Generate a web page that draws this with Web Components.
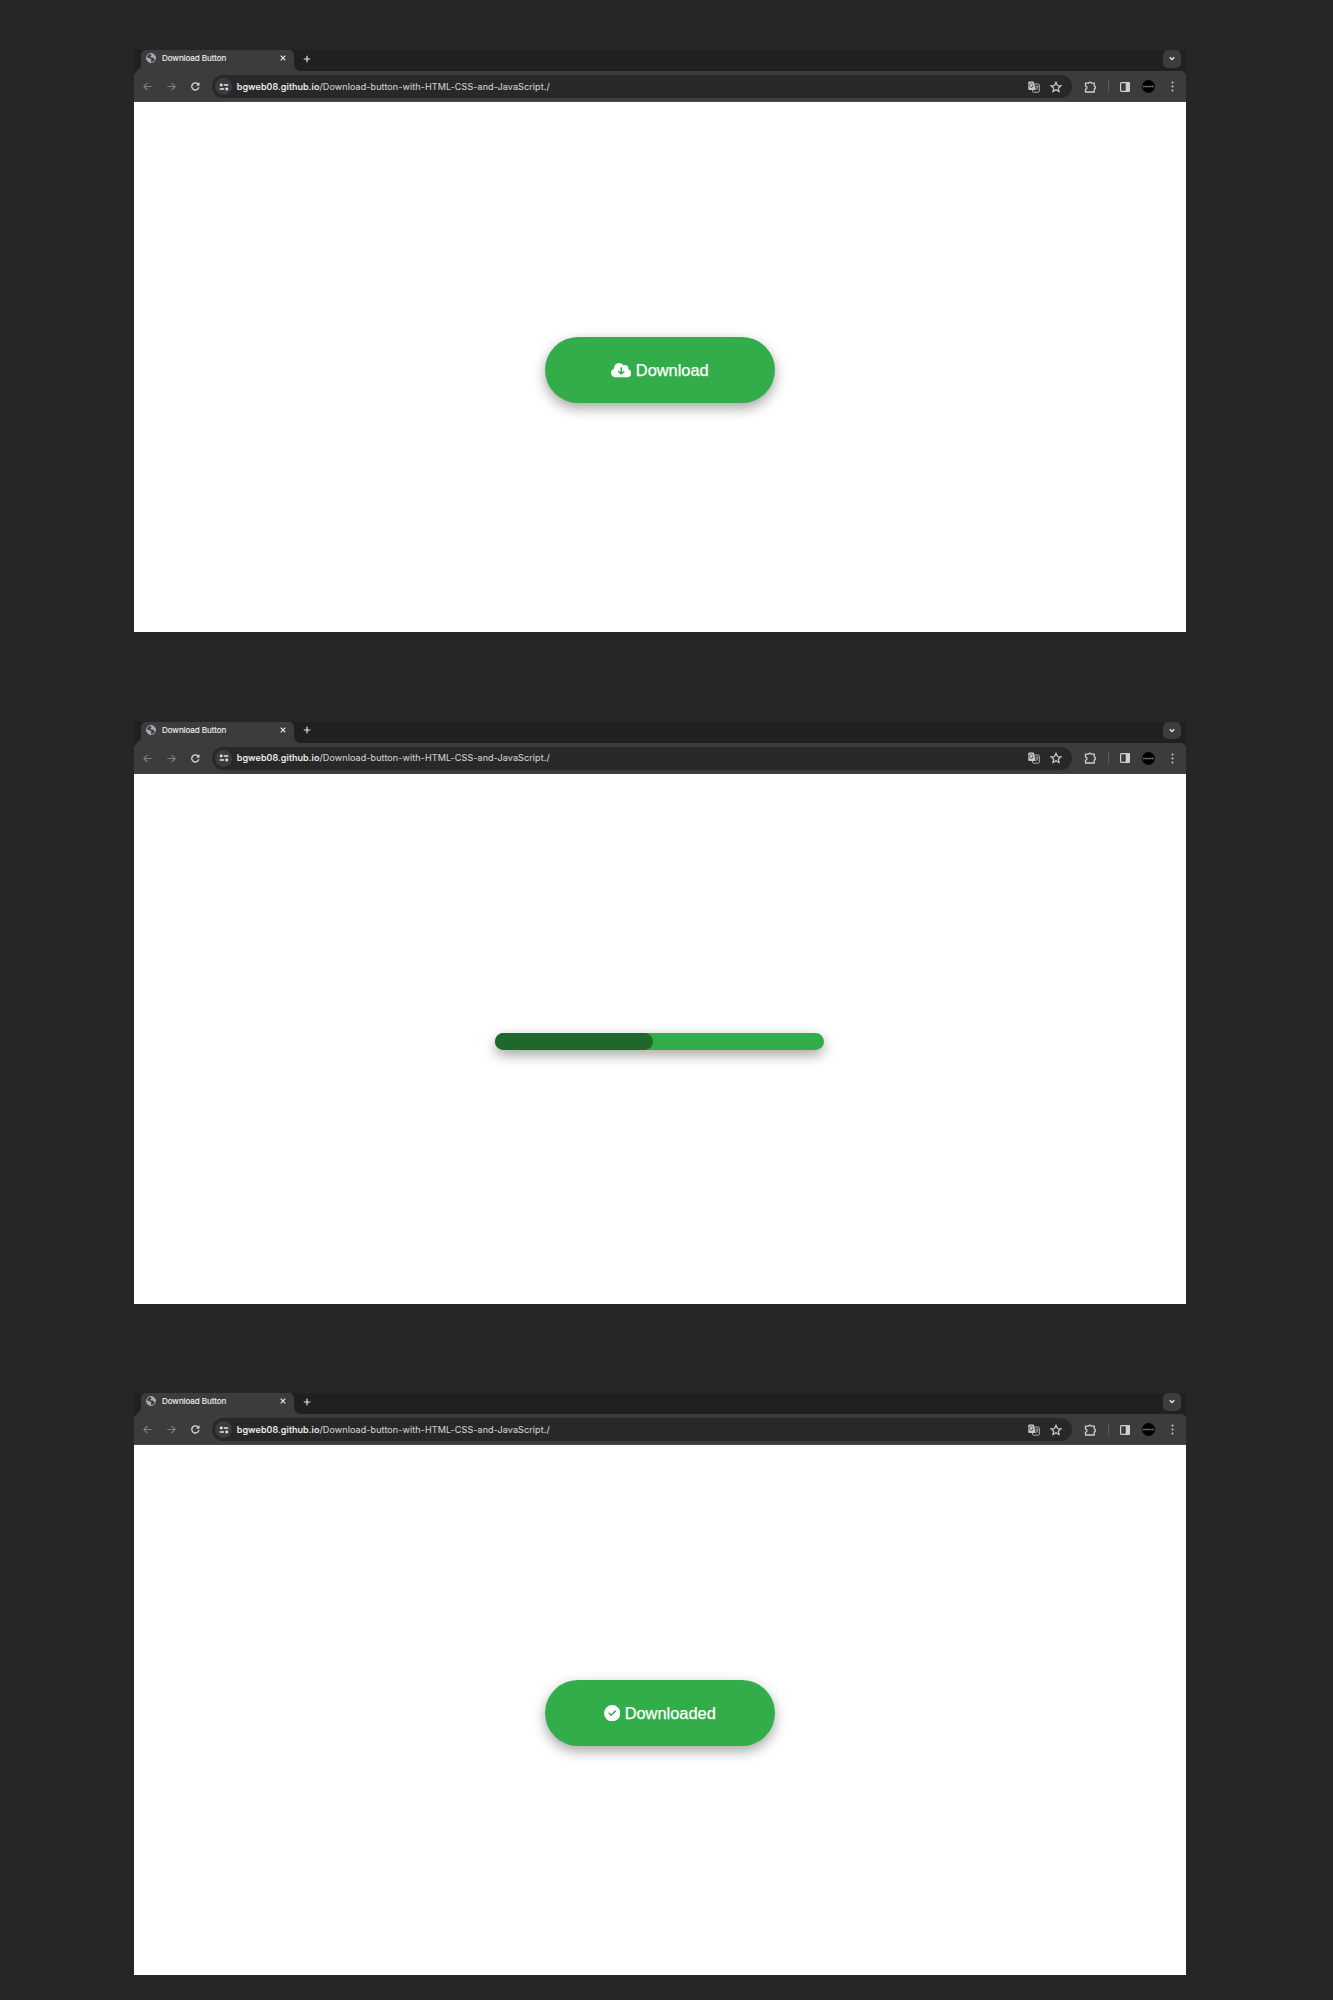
<!DOCTYPE html>
<html lang="en">
<head>
<meta charset="utf-8">
<title>Download Button</title>
<style>
html{background:#262626}
body{margin:0;height:2000px;overflow:hidden;background:#262626;font-family:Inter,"Liberation Sans",sans-serif}
.board{display:flex;flex-direction:column;align-items:flex-start;gap:89.3px;padding:50px 0 0 133.600px}
</style>
</head>
<body>
<div class="board">
  <browser-window><download-button label="Download" icon="cloud"></download-button></browser-window>
  <browser-window edge="#4b4143"><download-progress></download-progress></browser-window>
  <browser-window><download-button label="Downloaded" icon="check"></download-button></browser-window>
</div>
<script>
class TabStrip extends HTMLElement{
  constructor(){super();this.attachShadow({mode:'open'}).innerHTML=`
<style>
:host{display:flex;height:21px;background:#202020;padding:0 4.5px 0 7.4px;box-sizing:border-box;align-items:flex-start}
.tab{position:relative;display:flex;align-items:center;width:153px;height:21px;box-sizing:border-box;background:#3c3c3c;border-radius:5px 5px 0 0;padding:0 7.6px 5px 5.4px}
.tab::before,.tab::after{content:"";position:absolute;bottom:0;width:6px;height:6px}
.tab::before{left:-6px;background:radial-gradient(circle at 0 0,transparent 5.5px,#3c3c3c 6px)}
.tab::after{right:-6px;background:radial-gradient(circle at 100% 0,transparent 5.5px,#3c3c3c 6px)}
svg{display:block;flex:none}
.t{margin-left:5.6px;font-size:8.1px;line-height:12px;letter-spacing:-.08px;color:#ececec;-webkit-text-stroke:.12px;white-space:nowrap;flex:1}
.plus{margin:4.5px 0 0 9px}
.more{margin-left:auto;width:18px;height:17.5px;border-radius:5px;background:#3c3c3c;display:grid;place-items:center}
</style>
<div class="tab">
<svg width="10" height="10" viewBox="0 0 20 20"><circle cx="10" cy="10" r="9" fill="#3c3c3c" stroke="#a5abb1" stroke-width="2"/><path d="M1 9l5 .5 3 2.500 2 1-1 2.500v3C5 19 1 15 1 9zM9 1c5-1 8 2 10 6v5l-3.500-.5-2-2.500-3.500 0-1.500-2.500L11 5z" fill="#a5abb1"/></svg>
<span class="t">Download Button</span>
<svg width="6" height="6" viewBox="0 0 6 6"><path d="M.7.7l4.6 4.6M5.3.7L.7 5.3" stroke="#e8e8e8" stroke-width="1.2"/></svg>
</div>
<svg class="plus" width="8" height="8" viewBox="0 0 8 8"><path d="M4 .7v6.6M.7 4h6.6" stroke="#e8e8e8" stroke-width="1.200"/></svg>
<div class="more"><svg width="6" height="5" viewBox="0 0 6 5"><path d="M.7 1.2L3 3.5l2.300-2.300" fill="none" stroke="#e8e8e8" stroke-width="1.3"/></svg></div>`}
}
class ToolBar extends HTMLElement{
  constructor(){super();this.attachShadow({mode:'open'}).innerHTML=`
<style>
:host{display:flex;align-items:center;height:31.3px;box-sizing:border-box;background:#3c3c3c;border-radius:5px 5px 0 0;border-bottom:1px solid var(--edge,#484848);padding:1px 12px 0 9.9px}
svg{display:block;flex:none}
.nav{display:flex;align-items:center;gap:14.700px;width:68.700px}
.omni{display:flex;align-items:center;width:860px;height:22.800px;border-radius:12px;background:#282828;box-sizing:border-box;padding:0 9.800px 0 3px}
.info{width:17px;height:17px;border-radius:50%;background:#3c3c3c;display:grid;place-items:center;margin-right:4.600px}
.url{font-size:9px;line-height:12px;letter-spacing:.1px;white-space:nowrap;color:#cfcfcf;-webkit-text-stroke:.1px}
.url b{font-weight:500;color:#f2f2f2}
.acts{display:flex;gap:10px;margin-left:auto;align-items:center}
.right{display:flex;align-items:center;flex:1;padding-left:11.500px}
.sep{width:1px;height:11px;background:#5b5b5b;margin:0 11.500px 0 11px}
.av{width:13px;height:13px;border-radius:50%;background:#000;margin:0 15.500px 0 12px;display:grid;place-items:center}
</style>
<div class="nav">
<svg width="9" height="9" viewBox="0 0 9 9"><path d="M8.700 4.500H1M4.500.9L.9 4.500l3.600 3.600" fill="none" stroke="#7e7e7e" stroke-width="1.200"/></svg>
<svg width="9" height="9" viewBox="0 0 9 9"><path d="M.3 4.500H8M4.500.9l3.600 3.600-3.600 3.600" fill="none" stroke="#7e7e7e" stroke-width="1.200"/></svg>
<svg width="9" height="9" viewBox="0 0 9 9"><path d="M7.900 5.200A3.600 3.600 0 1 1 7.400 2.400" fill="none" stroke="#d4d4d4" stroke-width="1.300"/><path d="M8.500.3v3.500H5z" fill="#d4d4d4"/></svg>
</div>
<div class="omni">
<div class="info"><svg width="10" height="8" viewBox="0 0 9 7"><path d="M4.300 1.700h4M.6 5.300h4" stroke="#e3e3e3" stroke-width="1.200"/><circle cx="2" cy="1.700" r="1.300" fill="#e3e3e3"/><circle cx="7" cy="5.300" r="1.300" fill="#e3e3e3"/></svg></div>
<span class="url"><b>bgweb08.github.io</b>/Download-button-with-HTML-CSS-and-JavaScript./</span>
<div class="acts">
<svg width="12" height="12" viewBox="0 0 12 12"><rect x="4.500" y="3" width="6.800" height="8.200" rx="1" fill="none" stroke="#bcbcbc" stroke-width=".9"/><path d="M1.300.5h4.400l2 8.500H1.300a1 1 0 0 1-1-1V1.500a1 1 0 0 1 1-1z" fill="#c7c7c7"/><path d="M5 3.400A2 2 0 1 0 5.200 5H3.700" fill="none" stroke="#444" stroke-width=".8"/><path d="M7 5.300h3.600M8.800 4.500v.8M10 5.300Q9.500 7.500 7.500 8.800M8 6.300l2.300 2.400" fill="none" stroke="#bcbcbc" stroke-width=".7"/></svg>
<svg width="12" height="12" viewBox="0 0 11 11"><path d="M5.500 1.200l1.300 2.900 3.200.3-2.400 2.100.7 3.100-2.800-1.600-2.800 1.600.7-3.100L1 4.400l3.200-.3z" fill="none" stroke="#d0d0d0" stroke-width="1.100"/></svg>
</div></div>
<div class="right">
<svg width="13" height="12" viewBox="0 0 13 12"><path d="M1.500 2.200h3a1.400 1.100 0 0 1 2.800 0h3v3a1.200 1.400 0 0 1 0 2.800v3H1.500V8.200a1.400 1.400 0 0 0 0-3z" fill="none" stroke="#cecece" stroke-width="1.300" stroke-linejoin="round"/></svg>
<i class="sep"></i>
<svg width="10" height="10" viewBox="0 0 10 10"><rect x=".6" y=".6" width="8.800" height="8.800" rx=".7" fill="none" stroke="#cfcfcf" stroke-width="1.200"/><path d="M5.700.6h3.700v8.800H5.700z" fill="#cfcfcf"/></svg>
<div class="av"><svg width="11" height="3" viewBox="0 0 11 3"><path d="M0 1.500h11" stroke="#777" stroke-width="1.500" stroke-dasharray="1.500 .3"/></svg></div>
<svg width="3" height="11" viewBox="0 0 3 11"><g fill="#c9c9c9"><circle cx="1.500" cy="1.600" r="1"/><circle cx="1.500" cy="5.500" r="1"/><circle cx="1.500" cy="9.400" r="1"/></g></svg>
</div>`}
}
class BrowserWindow extends HTMLElement{
  constructor(){super();this.attachShadow({mode:'open'}).innerHTML=`
<style>
:host{display:flex;flex-direction:column;width:1052.400px;height:582.300px;background:#202020}
.page{flex:1;background:#fff;display:flex;align-items:center;justify-content:center;padding-top:5.600px;box-sizing:border-box}
</style>
<tab-strip></tab-strip><tool-bar></tool-bar><div class="page"><slot></slot></div>`}
  connectedCallback(){const e=this.getAttribute('edge');if(e)this.style.setProperty('--edge',e)}
}
class DownloadButton extends HTMLElement{
  connectedCallback(){
    const cloud='<svg viewBox="0 0 640 512" width="20.500" height="16.400"><path fill="#fff" d="M144 480C64.500 480 0 415.500 0 336c0-62.800 40.200-116.200 96.200-135.900c-.1-2.700-.2-5.400-.2-8.100c0-88.400 71.600-160 160-160c59.300 0 111 32.200 138.700 80.200C409.900 102 428.300 96 448 96c53 0 96 43 96 96c0 12.200-2.300 23.800-6.400 34.600C596 238.400 640 290.100 640 352c0 70.700-57.300 128-128 128H144zm79-167l80 80c9.400 9.400 24.600 9.400 33.900 0l80-80c9.400-9.400 9.400-24.600 0-33.900s-24.600-9.400-33.900 0l-39 39V184c0-13.300-10.700-24-24-24s-24 10.700-24 24V318.100l-39-39c-9.400-9.400-24.600-9.400-33.900 0s-9.400 24.600 0 33.900z"/></svg>';
    const check='<svg viewBox="0 0 512 512" width="16.400" height="16.400"><path fill="#fff" d="M256 512A256 256 0 1 0 256 0a256 256 0 1 0 0 512zM369 209L241 337c-9.400 9.400-24.600 9.400-33.900 0l-64-64c-9.400-9.400-9.400-24.600 0-33.900s24.600-9.400 33.900 0l47 47L335 175c9.400-9.400 24.600-9.400 33.900 0s9.400 24.600 0 33.900z"/></svg>';
    this.attachShadow({mode:'open'}).innerHTML=`
<style>
:host{display:flex;align-items:center;justify-content:center;gap:4.500px;width:230.400px;height:65.700px;border-radius:33px;background:#32ad4a;box-shadow:0 5px 13px rgba(0,0,0,.36);color:#fff;font:16.400px/20px "Liberation Sans",Arial,sans-serif;-webkit-text-stroke:.25px #fff}
svg{display:block}
</style>${this.getAttribute('icon')==='cloud'?cloud:check}<span>${this.getAttribute('label')}</span>`}
}
class DownloadProgress extends HTMLElement{
  constructor(){super();this.attachShadow({mode:'open'}).innerHTML=`
<style>
:host{display:flex;width:329.300px;height:16.500px;border-radius:9px;background:#32ad4a;box-shadow:0 5px 13px rgba(0,0,0,.36)}
.bar{width:157.800px;border-radius:9px;background:#20672c}
</style><div class="bar"></div>`}
}
customElements.define('tab-strip',TabStrip);
customElements.define('tool-bar',ToolBar);
customElements.define('browser-window',BrowserWindow);
customElements.define('download-button',DownloadButton);
customElements.define('download-progress',DownloadProgress);
</script>
</body>
</html>
